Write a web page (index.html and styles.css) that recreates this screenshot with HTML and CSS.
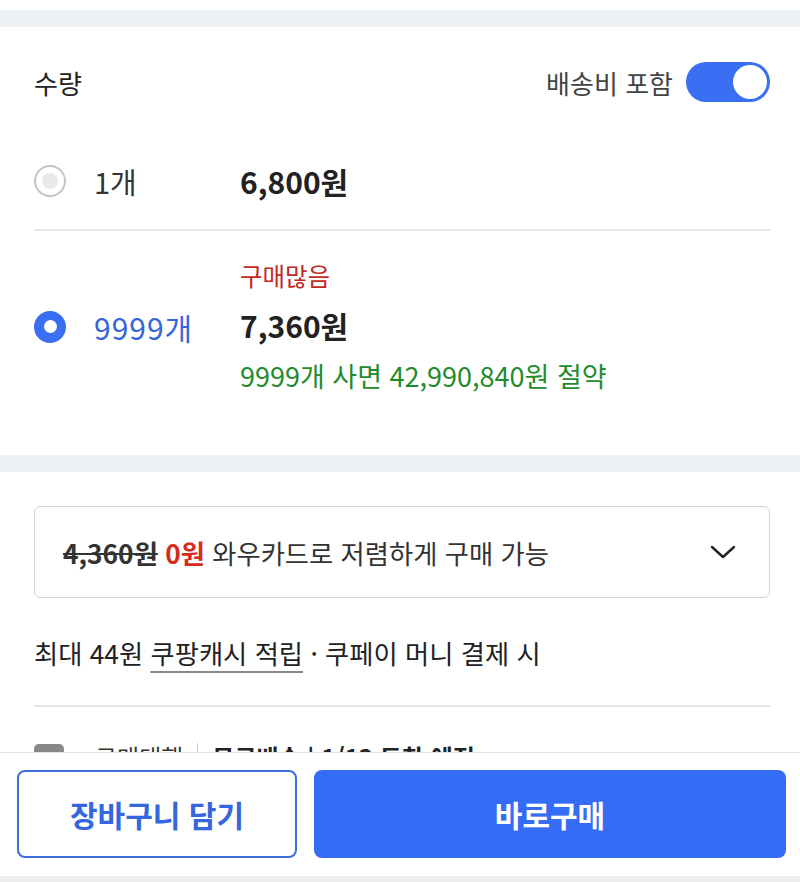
FILE: index.html
```html
<!DOCTYPE html>
<html lang="ko">
<head>
<meta charset="utf-8">
<link rel="stylesheet" href="styles.css">
</head>
<body>
<div class="page">
  <div class="top-white"></div>
  <div class="band"></div>

  <section class="qty">
    <div class="qty-head">
      <span class="qty-title">수량</span>
      <div class="ship">
        <span>배송비 포함</span>
        <span class="toggle"><span class="knob"></span></span>
      </div>
    </div>

    <div class="opt opt-1">
      <span class="radio"></span>
      <span class="opt-qty">1개</span>
      <span class="price">6,800원</span>
    </div>

    <div class="opt opt-2">
      <span class="radio radio-on"></span>
      <span class="opt-qty opt-qty-on">9999개</span>
      <div class="price-col">
        <span class="hot">구매많음</span>
        <span class="price">7,360원</span>
        <span class="save">9999개 사면 42,990,840원 절약</span>
      </div>
    </div>
  </section>

  <div class="band"></div>

  <section class="pay">
    <div class="card-box">
      <span class="card-text"><s class="old">4,360원</s> <b class="zero">0원</b> 와우카드로 저렴하게 구매 가능</span>
      <svg class="chev" width="28" height="16" viewBox="0 0 28 16"><polyline points="3,3 14,13 25,3" fill="none" stroke="#222" stroke-width="2.4" stroke-linecap="round" stroke-linejoin="round"/></svg>
    </div>
    <p class="cash">최대 44원 <span class="ul">쿠팡캐시 적립</span> · 쿠페이 머니 결제 시</p>
    <div class="rule"></div>
    <div class="partial">
      <span class="p-icon"></span>
      <span class="p-text">구매대행</span>
      <span class="p-sep"></span>
      <span class="p-bold">무료배송 | 1/13 도착 예정</span>
    </div>
  </section>
</div>

<div class="bottom-bar">
  <button class="btn btn-cart">장바구니 담기</button>
  <button class="btn btn-buy">바로구매</button>
</div>
</body>
</html>
```

FILE: styles.css
```css
* { box-sizing: border-box; }
html, body { margin: 0; padding: 0; background: #fff; }
body {
  font-family: "Noto Sans CJK KR", "Noto Sans", sans-serif;
  color: #222;
  width: 800px;
  height: 882px;
  overflow: hidden;
}
.top-white { height: 10px; }
.band { height: 17px; background: #eef1f4; }

.qty { padding: 0 30px 0 34px; }
.qty-head {
  display: flex;
  justify-content: space-between;
  align-items: center;
  padding-top: 35px;
  height: 75px;
}
.qty-title { font-size: 26px; color: #222; }
.ship { display: flex; align-items: center; gap: 13px; font-size: 26px; color: #444; }
.toggle {
  display: flex;
  justify-content: flex-end;
  align-items: center;
  width: 84px;
  height: 40px;
  border-radius: 20px;
  background: #3a6ff3;
  padding: 3px;
}
.knob { width: 34px; height: 34px; border-radius: 50%; background: #fff; }

.opt { display: flex; align-items: center; }
.opt-1 {
  height: 129px;
  padding-top: 30px;
  border-bottom: 2px solid #e4e6e9;
}
.radio {
  width: 32px;
  height: 32px;
  border-radius: 50%;
  border: 2px solid #c4c4c4;
  display: flex;
  align-items: center;
  justify-content: center;
  flex: none;
}
.radio::after {
  content: "";
  width: 16px;
  height: 16px;
  border-radius: 50%;
  background: #e9e9e9;
}
.radio-on { border: none; background: #3a6ff3; }
.radio-on::after { width: 13px; height: 13px; background: #fff; }

.opt-qty { width: 174px; padding-left: 28px; font-size: 29px; color: #333; }
.opt-qty-on { color: #3566da; font-size: 30px; letter-spacing: 1px; }
.price { font-size: 30px; font-weight: 700; color: #222; }

.opt-2 { padding: 30px 0 63px; }
.price-col { display: flex; flex-direction: column; }
.hot { font-size: 24.5px; line-height: 30px; color: #c2291f; }
.opt-2 .price { line-height: 40px; margin-top: 14px; }
.save { font-size: 27px; line-height: 32px; margin-top: 15px; color: #1f8c2c; }

.pay { padding: 34px 30px 0 34px; }
.card-box {
  height: 92px;
  border: 1.5px solid #d3d6da;
  border-radius: 6px;
  display: flex;
  align-items: center;
  justify-content: space-between;
  padding: 0 32px 0 28px;
}
.card-text { font-size: 26.3px; color: #333; }
.old { color: #333; font-weight: 700; text-decoration-thickness: 2px; }
.zero { color: #d52b1e; font-weight: 700; }

.cash { margin: 40px 0 0; font-size: 26.3px; line-height: 30px; color: #222; }
.ul { text-decoration: underline; text-decoration-color: #888; text-underline-offset: 7px; text-decoration-thickness: 2px; }
.rule { height: 1.5px; background: #e3e5e8; margin-top: 37px; }

.partial { display: flex; align-items: center; margin-top: 32px; gap: 0; font-size: 24px; }
.p-icon { width: 30px; height: 24px; border-radius: 5px; background: #888; }
.p-text { margin-left: 31px; color: #333; }
.p-sep { width: 1px; height: 26px; background: #ccc; margin: 0 14px; }
.p-bold { font-weight: 700; color: #222; }

.bottom-bar {
  position: fixed;
  left: 0;
  bottom: 0;
  width: 800px;
  height: 130px;
  background: #fff;
  border-top: 1.5px solid #e2e2e2;
  border-bottom: 6px solid #ededed;
  display: flex;
  gap: 17px;
  padding: 17px 14px 0 17px;
}
.btn {
  height: 88px;
  border-radius: 8px;
  font-family: "Noto Sans CJK KR", "Noto Sans", sans-serif;
  font-size: 30px;
  font-weight: 700;
  cursor: pointer;
}
.btn-cart {
  width: 280px;
  background: #fff;
  border: 2px solid #3d6fdc;
  color: #3466dd;
}
.btn-buy {
  flex: 1;
  background: #356cf6;
  border: none;
  color: #fff;
}
```
